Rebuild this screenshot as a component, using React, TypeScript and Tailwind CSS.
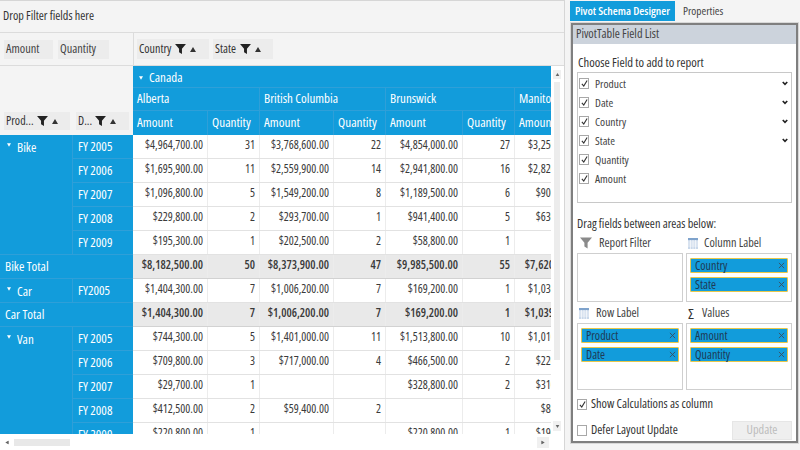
import React from "react";

function Funnel({ className = "" }: { className?: string }) {
  return (
    <svg viewBox="0 0 12 11" className={className} fill="currentColor">
      <path d="M0 0h12L7.6 5.2V11L4.4 9V5.2z" />
    </svg>
  );
}

function Tri({ down = false, className = "" }: { down?: boolean; className?: string }) {
  return (
    <svg viewBox="0 0 6 5" className={className} fill="currentColor">
      <path d={down ? "M0 0h6L3 5z" : "M3 0l3 5H0z"} />
    </svg>
  );
}

function HeadChip({ label, className, textW }: { label: string; className: string; textW: string }) {
  return (
    <div className={`flex items-center bg-[#ececec] pl-[2px] text-[12px] text-[#333] ${className}`}>
      <span className={textW}>{label}</span>
      <Funnel className="h-[10px] w-[11px] text-[#222]" />
      <Tri className="ml-[4px] h-[5px] w-[6px] text-[#333]" />
    </div>
  );
}

const cols = [75, 52, 74, 52, 77, 52, 76];
type Row = { total?: boolean; cells: string[] };
const rows: Row[] = [
  { cells: ["$4,964,700.00", "31", "$3,768,600.00", "22", "$4,854,000.00", "27", "$3,250,000.00"] },
  { cells: ["$1,695,900.00", "11", "$2,559,900.00", "14", "$2,941,800.00", "16", "$2,820,000.00"] },
  { cells: ["$1,096,800.00", "5", "$1,549,200.00", "8", "$1,189,500.00", "6", "$900,000.00"] },
  { cells: ["$229,800.00", "2", "$293,700.00", "1", "$941,400.00", "5", "$630,000.00"] },
  { cells: ["$195,300.00", "1", "$202,500.00", "2", "$58,800.00", "1", ""] },
  { total: true, cells: ["$8,182,500.00", "50", "$8,373,900.00", "47", "$9,985,500.00", "55", "$7,620,000.00"] },
  { cells: ["$1,404,300.00", "7", "$1,006,200.00", "7", "$169,200.00", "1", "$1,030,000.00"] },
  { total: true, cells: ["$1,404,300.00", "7", "$1,006,200.00", "7", "$169,200.00", "1", "$1,039,000.00"] },
  { cells: ["$744,300.00", "5", "$1,401,000.00", "11", "$1,513,800.00", "10", "$1,010,000.00"] },
  { cells: ["$709,800.00", "3", "$717,000.00", "4", "$466,500.00", "2", "$220,000.00"] },
  { cells: ["$29,700.00", "1", "", "", "$328,800.00", "2", "$310,000.00"] },
  { cells: ["$412,500.00", "2", "$59,400.00", "2", "", "", "$80,000.00"] },
  { cells: ["$220,800.00", "1", "", "", "$220,800.00", "1", "$190,000.00"] },
];

function DataRow({ row }: { row: Row }) {
  const bg = row.total ? "bg-[#e9e9e9] font-semibold border-[#d2d2d2]" : "bg-white border-[#e2e2e2]";
  return (
    <div className={`flex h-[24px] border-b text-[11.8px] text-[#3a3a3a] ${bg}`}>
      {row.cells.map((c, i) => (
        <div
          key={i}
          className="flex shrink-0 justify-end whitespace-nowrap border-r border-[#ececec] pr-[4px] pt-[1px]"
          style={{ width: cols[i] }}
        >
          {c}
        </div>
      ))}
    </div>
  );
}

function CheckBox({ on = true, size = "h-[11px] w-[10px]" }: { on?: boolean; size?: string }) {
  return (
    <div className={`flex shrink-0 items-center justify-center border border-[#a8a8a8] bg-white ${size}`}>
      {on && (
        <svg viewBox="0 0 12 12" className="h-[9px] w-[9px] shrink-0" fill="none" stroke="#333" strokeWidth="1.5">
          <path d="M2.5 6.5l2.5 3L9.5 2" />
        </svg>
      )}
    </div>
  );
}

function FieldRow({ label, chev }: { label: string; chev?: boolean }) {
  return (
    <div className="flex h-[19px] items-center pl-[1px] pr-[3px] text-[11.5px] text-[#444]">
      <CheckBox />
      <span className="ml-[6px] flex-1">{label}</span>
      {chev && (
        <svg viewBox="0 0 8 6" className="h-[5px] w-[6px]" fill="none" stroke="#222" strokeWidth="2.2">
          <path d="M1 1l3 3 3-3" />
        </svg>
      )}
    </div>
  );
}

function Pill({ label }: { label: string }) {
  return (
    <div className="flex h-[15px] shrink-0 items-center justify-between rounded-[1px] border border-[#e8c84a] bg-[#129cdb] pl-[4px] pr-[2px] text-[12px] text-[#1f3a55]">
      <span>{label}</span>
      <svg viewBox="0 0 8 8" className="h-[7px] w-[7px]" fill="none" stroke="#3a4a5a" strokeWidth="1">
        <path d="M1 1l6 6M7 1L1 7" />
      </svg>
    </div>
  );
}

function Area({ title, icon, pills = [], h, iconW, gap }: { title: string; icon: React.ReactNode; pills?: string[]; h: string; iconW: string; gap: string }) {
  return (
    <div className="w-[106px]">
      <div className="flex h-[20px] items-center text-[12.2px] text-[#444]">
        <span className={`flex justify-center ${iconW}`}>{icon}</span>
        <span className={gap}>{title}</span>
      </div>
      <div className={`flex flex-col gap-[4px] border border-[#cfcfcf] bg-white px-[3px] pt-[4px] ${h}`}>
        {pills.map((p) => (
          <Pill key={p} label={p} />
        ))}
      </div>
    </div>
  );
}

function GridIcon() {
  return (
    <svg viewBox="0 0 10 11" className="h-[11px] w-[10px]">
      <rect width="10" height="11" fill="#c9d8ea" />
      <rect width="10" height="2" fill="#7fa3cc" />
      <path d="M0 4h10M0 6h10M0 8h10M2.5 2v9M5 2v9M7.5 2v9" stroke="#fff" strokeWidth=".6" />
    </svg>
  );
}

function YearCol({ years }: { years: string[] }) {
  return (
    <div className="flex-1">
      {years.map((y, i) => (
        <div key={i} className="flex h-[24px] items-start border-b border-[#2f9fd8] pl-[5px] pt-[2px]">
          {y}
        </div>
      ))}
    </div>
  );
}

function Block({ name, years }: { name: string; years: string[] }) {
  return (
    <div className="flex">
      <div className="flex w-[73px] items-start border-b border-r border-[#2f9fd8] pl-[7px] pt-[3px]">
        <Tri down className="mr-[6px] mt-[5px] h-[4px] w-[4px]" />
        {name}
      </div>
      <YearCol years={years} />
    </div>
  );
}

function Total({ name }: { name: string }) {
  return <div className="flex h-[24px] items-center border-b border-[#2f9fd8] pb-[1px] pl-[5px]">{name}</div>;
}

const five = ["FY 2005", "FY 2006", "FY 2007", "FY 2008", "FY 2009"];

export default function App() {
  return (
    <div className="flex h-[450px] w-[800px] overflow-hidden bg-white font-['Open_Sans','Noto_Sans',sans-serif] font-stretch-condensed">
      {/* left pane */}
      <div className="flex h-full w-[565px] shrink-0 flex-col border-r border-[#d6d6d6]">
        <div className="flex h-[33px] shrink-0 items-center border-y border-b-[#dcdcdc] border-t-[#d6d6d6] bg-[#f4f4f4] pl-[3px] text-[12.2px] text-[#333]">
          Drop Filter fields here
        </div>
        <div className="flex h-[33px] shrink-0 border-b border-[#dcdcdc] bg-[#f4f4f4]">
          <div className="flex w-[134px] shrink-0 items-center gap-[5px] border-r border-[#dcdcdc] pl-[4px]">
            <div className="flex h-[19px] w-[49px] items-center bg-[#ececec] pl-[2px] text-[12.3px] text-[#444]">Amount</div>
            <div className="flex h-[19px] w-[51px] items-center bg-[#ececec] pl-[2px] text-[12.3px] text-[#444]">Quantity</div>
          </div>
          <div className="flex items-center gap-[4px] pl-[3px]">
            <HeadChip label="Country" className="h-[20px] w-[72px]" textW="w-[36px]" />
            <HeadChip label="State" className="h-[20px] w-[60px]" textW="w-[25px]" />
          </div>
        </div>
        <div className="flex min-h-0 flex-1">
          <div className="flex min-w-0 flex-1 flex-col">
            <div className="h-[368px] shrink-0 overflow-hidden">
              <div className="flex">
                {/* row headers */}
                <div className="w-[133px] shrink-0">
                  <div className="flex h-[69px] items-end gap-[6px] bg-[#f4f4f4] pb-[5px] pl-[4px]">
                    <HeadChip label="Prod..." className="h-[18px] w-[66px]" textW="w-[31px]" />
                    <HeadChip label="D..." className="h-[18px] w-[53px]" textW="w-[17px]" />
                  </div>
                  <div className="bg-[#129cdb] text-[13px] leading-[18px] text-white">
                    <Block name="Bike" years={five} />
                    <Total name="Bike Total" />
                    <Block name="Car" years={["FY2005"]} />
                    <Total name="Car Total" />
                    <Block name="Van" years={five} />
                  </div>
                </div>
                {/* values */}
                <div className="w-[418px] shrink-0 overflow-hidden">
                  <div className="w-[460px]">
                    <div className="h-[69px] bg-[#129cdb] text-white">
                      <div className="flex h-[22px] items-center border-b border-[#2f9fd8] pl-[6px] pt-[2px] text-[13px]">
                        <Tri down className="mr-[6px] h-[4px] w-[4px]" />
                        Canada
                      </div>
                      <div className="flex h-[23px] border-b border-[#2f9fd8] text-[13px]">
                        {[["Alberta", 127], ["British Columbia", 126], ["Brunswick", 129], ["Manitoba", 76]].map(([t, w]) => (
                          <div key={t as string} className="border-r border-[#2f9fd8] pl-[4px] leading-[20px]" style={{ width: w as number }}>
                            {t}
                          </div>
                        ))}
                      </div>
                      <div className="flex h-[24px] text-[13.2px]">
                        {cols.map((w, i) => (
                          <div key={i} className="flex h-full items-center border-r border-[#2f9fd8] pl-[4px]" style={{ width: w }}>
                            {i % 2 === 0 ? "Amount" : "Quantity"}
                          </div>
                        ))}
                      </div>
                    </div>
                    {rows.map((r, i) => (
                      <DataRow key={i} row={r} />
                    ))}
                  </div>
                </div>
              </div>
            </div>
            {/* horizontal bar */}
            <div className="flex h-[15px] items-center pl-[2px] pr-[2px] pt-[2px]">
              <div className="flex h-[10px] w-[9px] items-center justify-center text-[#666]">
                <Tri className="h-[5px] w-[4px] -rotate-90" />
              </div>
              <div className="ml-[3px] h-[7px] w-[56px] bg-[#e8e8e8]" />
              <div className="flex-1" />
              <div className="flex h-[11px] w-[12px] items-center justify-center bg-[#f0f0f0] text-[#666]">
                <Tri className="h-[5px] w-[4px] rotate-90" />
              </div>
            </div>
          </div>
          {/* vertical bar */}
          <div className="flex h-[368px] w-[13px] shrink-0 flex-col pl-[2px] pt-[4px]">
            <div className="flex h-[9px] w-[8px] shrink-0 items-center justify-center bg-[#f0f0f0] text-[#666]">
              <Tri className="h-[3px] w-[5px]" />
            </div>
            <div className="ml-[1px] mt-[3px] h-[278px] w-[6px] bg-[#ececec]" />
            <div className="flex-1" />
            <div className="mb-[3px] flex h-[10px] w-[8px] shrink-0 items-center justify-center bg-[#f0f0f0] text-[#666]">
              <Tri down className="h-[3px] w-[5px]" />
            </div>
          </div>
        </div>
      </div>
      {/* right pane */}
      <div className="flex flex-1 flex-col bg-[#f4f4f4] pl-[5px] pr-[2px]">
        <div className="flex h-[23px] shrink-0 items-start pt-[1px] text-[11.5px]">
          <div className="flex h-[20px] w-[105px] items-center justify-center whitespace-nowrap bg-[#129cdb] font-semibold text-white">
            Pivot Schema Designer
          </div>
          <div className="pl-[8px] text-[11.3px] leading-[20px] text-[#444]">Properties</div>
        </div>
        <div className="mb-[7px] ml-[1px] flex-1 border-2 border-[#7f7f7f] bg-white outline outline-1 outline-[#d8d8d8]">
          <div className="flex h-[19px] items-center bg-[#ccd3dc] pl-[3px] text-[12.3px] text-[#444]">PivotTable Field List</div>
          <div className="px-[4px]">
            <div className="pl-[1px] pt-[10px] text-[12.6px] leading-[18px] text-[#333]">Choose Field to add to report</div>
            <div className="h-[131px] border border-[#c8c8c8] pt-[1px]">
              <FieldRow label="Product" chev />
              <FieldRow label="Date" chev />
              <FieldRow label="Country" chev />
              <FieldRow label="State" chev />
              <FieldRow label="Quantity" />
              <FieldRow label="Amount" />
            </div>
            <div className="pt-[12px] text-[12.2px] leading-[18px] text-[#333]">Drag fields between areas below:</div>
            <div className="flex gap-[3px]">
              <Area title="Report Filter" h="h-[49px]" iconW="w-[18px]" gap="ml-[4px]" icon={<Funnel className="h-[12px] w-[12px] text-[#8a8a8a]" />} />
              <Area title="Column Label" h="h-[49px]" iconW="w-[13px]" gap="ml-[5px]" icon={<GridIcon />} pills={["Country", "State"]} />
            </div>
            <div className="mt-[1px] flex gap-[3px]">
              <Area title="Row Label" h="h-[67px]" iconW="w-[14px]" gap="ml-[5px]" icon={<GridIcon />} pills={["Product", "Date"]} />
              <Area title="Values" h="h-[67px]" iconW="w-[10px]" gap="ml-[6px]" icon={<span className="text-[15px] leading-[15px] text-[#333]">Σ</span>} pills={["Amount", "Quantity"]} />
            </div>
            <div className="mt-[5px] flex h-[18px] items-center text-[12.3px] text-[#333]">
              <CheckBox />
              <span className="ml-[4px]">Show Calculations as column</span>
            </div>
            <div className="mt-[8px] flex h-[19px] items-center text-[12.3px] text-[#333]">
              <CheckBox on={false} />
              <span className="ml-[4px] flex-1">Defer Layout Update</span>
              <div className="flex h-[19px] w-[60px] items-center justify-center border border-[#e6e6e6] bg-[#efefef] text-[#bdbdbd]">Update</div>
            </div>
          </div>
        </div>
      </div>
    </div>
  );
}
